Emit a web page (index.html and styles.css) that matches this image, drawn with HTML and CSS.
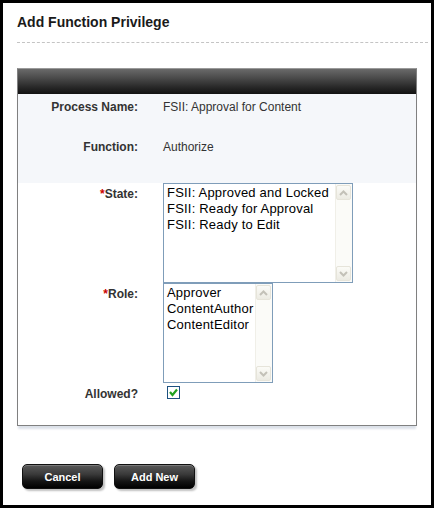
FILE: index.html
```html
<!DOCTYPE html>
<html>
<head>
<meta charset="utf-8">
<title>Add Function Privilege</title>
<link rel="stylesheet" href="styles.css">
</head>
<body>
<div class="dialog">
  <h1 class="title">Add Function Privilege</h1>
  <div class="divider"></div>
  <div class="panel">
    <div class="panel-head"></div>
    <div class="info">
      <div class="row">
        <div class="label">Process Name:</div>
        <div class="value">FSII: Approval for Content</div>
      </div>
      <div class="row">
        <div class="label">Function:</div>
        <div class="value">Authorize</div>
      </div>
    </div>
    <div class="form">
      <div class="frow">
        <div class="label"><span class="req">*</span>State:</div>
        <div class="listbox state">
          <div class="options">
            <div class="opt">FSII: Approved and Locked</div>
            <div class="opt">FSII: Ready for Approval</div>
            <div class="opt">FSII: Ready to Edit</div>
          </div>
          <div class="scrollbar">
            <div class="sbtn"><svg width="9" height="6" viewBox="0 0 9 6"><polyline points="1,5 4.5,1.5 8,5" fill="none" stroke="#c3c1b8" stroke-width="2"/></svg></div>
            <div class="strack"></div>
            <div class="sbtn"><svg width="9" height="6" viewBox="0 0 9 6"><polyline points="1,1 4.5,4.5 8,1" fill="none" stroke="#c3c1b8" stroke-width="2"/></svg></div>
          </div>
        </div>
      </div>
      <div class="frow">
        <div class="label"><span class="req">*</span>Role:</div>
        <div class="listbox role">
          <div class="options">
            <div class="opt">Approver</div>
            <div class="opt">ContentAuthor</div>
            <div class="opt">ContentEditor</div>
          </div>
          <div class="scrollbar">
            <div class="sbtn"><svg width="9" height="6" viewBox="0 0 9 6"><polyline points="1,5 4.5,1.5 8,5" fill="none" stroke="#c3c1b8" stroke-width="2"/></svg></div>
            <div class="strack"></div>
            <div class="sbtn"><svg width="9" height="6" viewBox="0 0 9 6"><polyline points="1,1 4.5,4.5 8,1" fill="none" stroke="#c3c1b8" stroke-width="2"/></svg></div>
          </div>
        </div>
      </div>
      <div class="frow allowed">
        <div class="label">Allowed?</div>
        <div class="checkbox"><svg width="11" height="11" viewBox="0 0 11 11"><polyline points="2,5 4.5,8 9,2.5" fill="none" stroke="#1fa11f" stroke-width="2.2"/></svg></div>
      </div>
    </div>
  </div>
  <div class="actions">
    <button class="btn">Cancel</button>
    <button class="btn">Add New</button>
  </div>
</div>
</body>
</html>
```
FILE: styles.css
```css
html, body {
  margin: 0;
  padding: 0;
  background: #fff;
}
body {
  font-family: "Liberation Sans", Arial, sans-serif;
  color: #333;
}
.dialog {
  box-sizing: border-box;
  width: 434px;
  height: 508px;
  border: 3px solid #000;
  padding: 0 3px 0 14px;
  background: #fff;
}
.title {
  margin: 11px 0 0 0;
  font-size: 14px;
  line-height: 16px;
  font-weight: bold;
  color: #1a1a1a;
}
.divider {
  margin-top: 12px;
  height: 0;
  border-top: 1px dashed #c4c4c4;
}
.panel {
  margin-top: 25px;
  width: 400px;
  box-sizing: border-box;
  border: 1px solid #808080;
  border-top-color: #9a9a9a;
  box-shadow: 0 4px 2px -1px #dce1e9;
}
.panel-head {
  height: 25px;
  background: linear-gradient(#6a6a6a, #4b4b4b 35%, #262626 75%, #121212);
}
.info {
  background: #f5f7fa;
  padding-bottom: 9px;
}
.row {
  display: flex;
  height: 40px;
  box-sizing: border-box;
  padding-top: 6px;
}
.label {
  width: 120px;
  flex: none;
  text-align: right;
  font-size: 12px;
  line-height: 14px;
  font-weight: bold;
  color: #333;
}
.value {
  margin-left: 25px;
  font-size: 12px;
  line-height: 14px;
  color: #333;
}
.req {
  color: #cc0000;
}
.form {
  padding-bottom: 24px;
}
.frow {
  display: flex;
  align-items: flex-start;
}
.frow .label {
  padding-top: 4px;
}
.listbox {
  margin-left: 25px;
  box-sizing: border-box;
  height: 100px;
  border: 1px solid #7f9db9;
  background: #fff;
  display: flex;
}
.listbox.state {
  width: 190px;
}
.listbox.role {
  width: 110px;
}
.options {
  flex: 1;
  padding: 1px 0 0 3px;
  font-size: 13px;
  line-height: 16px;
  letter-spacing: 0.2px;
  color: #000;
  white-space: nowrap;
  overflow: hidden;
}
.scrollbar {
  width: 17px;
  flex: none;
  display: flex;
  flex-direction: column;
  background: #fbfbf8;
  border-left: 1px solid #f0efe8;
  box-sizing: border-box;
  padding: 1px 1px 1px 0;
}
.sbtn {
  height: 15px;
  box-sizing: border-box;
  border: 1px solid #e6e4da;
  border-radius: 2px;
  background: linear-gradient(#fbfbf7, #ecebe3);
  display: flex;
  align-items: center;
  justify-content: center;
}
.strack {
  flex: 1;
}
.checkbox {
  margin: 3px 0 0 29px;
  width: 13px;
  height: 13px;
  box-sizing: border-box;
  border: 1px solid #1c5180;
  background: #fff;
  display: flex;
  align-items: center;
  justify-content: center;
}
.checkbox svg {
  display: block;
}
.actions {
  margin-top: 38px;
  padding-left: 5px;
  display: flex;
  gap: 11px;
}
.btn {
  width: 81px;
  height: 25px;
  border: 1px solid #111;
  border-radius: 5px;
  background: linear-gradient(#5a5a5a, #3a3a3a 40%, #151515 70%, #000);
  box-shadow: inset 0 1px 0 #7a7a7a, 2px 2px 2px #c0c0c0;
  color: #fff;
  font-family: "Liberation Sans", Arial, sans-serif;
  font-size: 11px;
  font-weight: bold;
  padding: 0;
  cursor: pointer;
}
```
